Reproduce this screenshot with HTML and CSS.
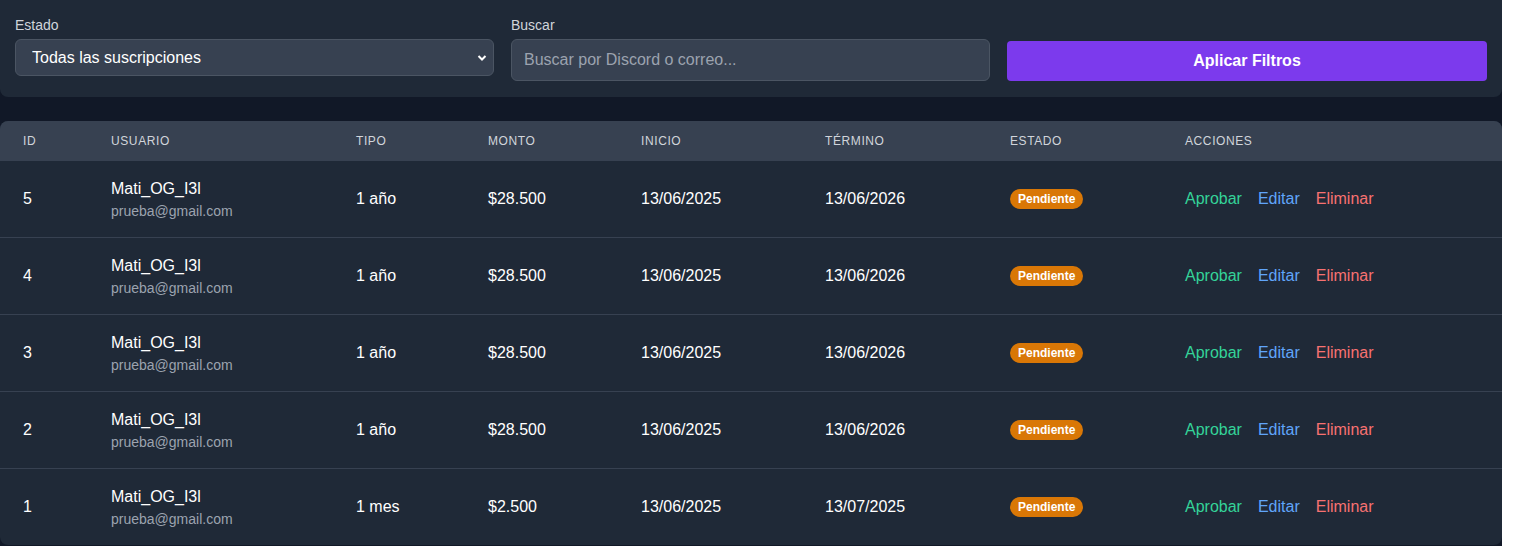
FILE: index.html
```html
<!DOCTYPE html>
<html lang="es">
<head>
<meta charset="utf-8">
<title>Suscripciones</title>
<link rel="stylesheet" href="styles.css">
</head>
<body>
<div class="page">
  <section class="filters">
    <div class="field">
      <label class="label">Estado</label>
      <div class="select-wrap">
        <select class="select">
          <option>Todas las suscripciones</option>
        </select>
        <svg class="chev" width="10" height="8" viewBox="0 0 10 8"><path d="M1.5 2 L5 5.5 L8.5 2" fill="none" stroke="#fff" stroke-width="2"/></svg>
      </div>
    </div>
    <div class="field">
      <label class="label">Buscar</label>
      <input class="input" type="text" placeholder="Buscar por Discord o correo...">
    </div>
    <div class="field">
      <button class="btn">Aplicar Filtros</button>
    </div>
  </section>

  <section class="table-card">
    <table class="table">
      <colgroup>
        <col style="width:88px"><col style="width:245px"><col style="width:132px"><col style="width:153px">
        <col style="width:184px"><col style="width:185px"><col style="width:175px"><col style="width:340px">
      </colgroup>
      <thead>
        <tr>
          <th>ID</th><th>Usuario</th><th>Tipo</th><th>Monto</th><th>Inicio</th><th>Término</th><th>Estado</th><th>Acciones</th>
        </tr>
      </thead>
      <tbody>
        <tr>
          <td>5</td>
          <td><div class="name">Mati_OG_I3l</div><div class="email">prueba@gmail.com</div></td>
          <td>1 año</td><td>$28.500</td><td>13/06/2025</td><td>13/06/2026</td>
          <td><span class="badge">Pendiente</span></td>
          <td><span class="act green">Aprobar</span><span class="act blue">Editar</span><span class="act red">Eliminar</span></td>
        </tr>
        <tr>
          <td>4</td>
          <td><div class="name">Mati_OG_I3l</div><div class="email">prueba@gmail.com</div></td>
          <td>1 año</td><td>$28.500</td><td>13/06/2025</td><td>13/06/2026</td>
          <td><span class="badge">Pendiente</span></td>
          <td><span class="act green">Aprobar</span><span class="act blue">Editar</span><span class="act red">Eliminar</span></td>
        </tr>
        <tr>
          <td>3</td>
          <td><div class="name">Mati_OG_I3l</div><div class="email">prueba@gmail.com</div></td>
          <td>1 año</td><td>$28.500</td><td>13/06/2025</td><td>13/06/2026</td>
          <td><span class="badge">Pendiente</span></td>
          <td><span class="act green">Aprobar</span><span class="act blue">Editar</span><span class="act red">Eliminar</span></td>
        </tr>
        <tr>
          <td>2</td>
          <td><div class="name">Mati_OG_I3l</div><div class="email">prueba@gmail.com</div></td>
          <td>1 año</td><td>$28.500</td><td>13/06/2025</td><td>13/06/2026</td>
          <td><span class="badge">Pendiente</span></td>
          <td><span class="act green">Aprobar</span><span class="act blue">Editar</span><span class="act red">Eliminar</span></td>
        </tr>
        <tr>
          <td>1</td>
          <td><div class="name">Mati_OG_I3l</div><div class="email">prueba@gmail.com</div></td>
          <td>1 mes</td><td>$2.500</td><td>13/06/2025</td><td>13/07/2025</td>
          <td><span class="badge">Pendiente</span></td>
          <td><span class="act green">Aprobar</span><span class="act blue">Editar</span><span class="act red">Eliminar</span></td>
        </tr>
      </tbody>
    </table>
  </section>
</div>
</body>
</html>
```

FILE: styles.css
```css
* { box-sizing: border-box; }
html, body { margin: 0; padding: 0; background: #ffffff; }
body {
  font-family: "Liberation Sans", Arial, sans-serif;
  color: #ffffff;
  overflow: hidden;
}
.page {
  width: 1502px;
  height: 546px;
  background: #111827;
}
.filters {
  background: #1f2937;
  border-radius: 0 0 8px 8px;
  padding: 15px 15px 16px;
  display: grid;
  grid-template-columns: 480px 480px 480px;
  column-gap: 16px;
  align-items: start;
}
.field { display: flex; flex-direction: column; }
.label {
  font-size: 14px;
  line-height: 20px;
  color: #d1d5db;
  margin-bottom: 4px;
}
.select-wrap { position: relative; width: 479px; }
.select {
  -webkit-appearance: none;
  appearance: none;
  width: 479px;
  height: 37px;
  background: #374151;
  border: 1px solid #4b5563;
  border-radius: 6px;
  color: #ffffff;
  font-family: "Liberation Sans", Arial, sans-serif;
  font-size: 16px;
  padding: 0 30px 0 16px;
  outline: none;
}
.chev { position: absolute; right: 7px; top: 15px; pointer-events: none; }
.input {
  width: 479px;
  height: 42px;
  background: #374151;
  border: 1px solid #4b5563;
  border-radius: 6px;
  color: #ffffff;
  font-family: "Liberation Sans", Arial, sans-serif;
  font-size: 16px;
  padding: 0 12px;
  outline: none;
}
.input::placeholder { color: #9ca3af; }
.btn {
  margin-top: 26px;
  width: 480px;
  height: 40px;
  background: #7c3aed;
  border: none;
  border-radius: 4px;
  color: #ffffff;
  font-family: "Liberation Sans", Arial, sans-serif;
  font-size: 16px;
  font-weight: 700;
}
.table-card {
  margin-top: 24px;
  background: #1f2937;
  border-radius: 8px;
  overflow: hidden;
}
.table {
  width: 1502px;
  table-layout: fixed;
  border-collapse: separate;
  border-spacing: 0;
}
.table thead tr { background: #374151; }
.table th {
  box-sizing: content-box;
  height: 40px;
  padding: 0 0 0 23px;
  text-align: left;
  font-size: 12px;
  font-weight: 400;
  letter-spacing: 0.05em;
  text-transform: uppercase;
  color: #d1d5db;
  vertical-align: middle;
}
.table td {
  box-sizing: content-box;
  height: 76px;
  padding: 0 0 0 23px;
  font-size: 16px;
  color: #ffffff;
  vertical-align: middle;
  white-space: nowrap;
  border-bottom: 1px solid #374151;
}
.table tbody tr:last-child td { border-bottom: none; }
.name { font-size: 16px; line-height: 24px; color: #ffffff; }
.email { font-size: 14px; line-height: 20px; color: #9ca3af; }
.badge {
  display: inline-block;
  background: #d97706;
  color: #ffffff;
  font-size: 12px;
  font-weight: 700;
  line-height: 20px;
  padding: 0 8px;
  border-radius: 9999px;
}
.act { font-size: 16px; margin-right: 16px; }
.green { color: #34d399; }
.blue { color: #60a5fa; }
.red { color: #f87171; }
```
